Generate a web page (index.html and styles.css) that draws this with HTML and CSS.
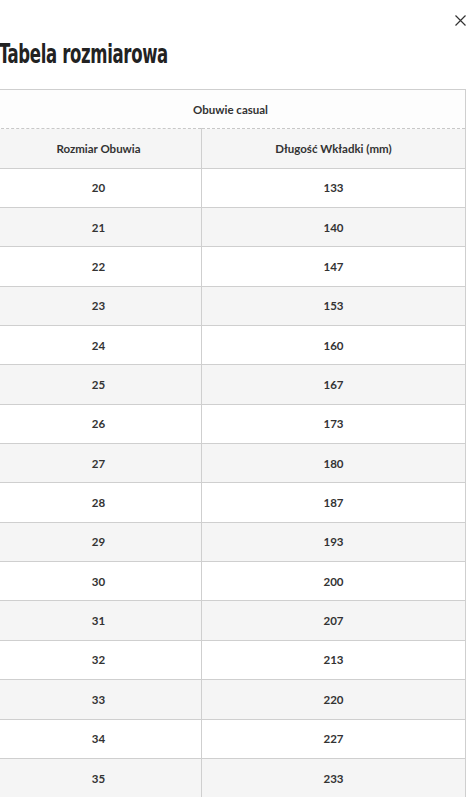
FILE: index.html
```html
<!DOCTYPE html>
<html lang="pl">
<head>
<meta charset="utf-8">
<link rel="stylesheet" href="styles.css">
<title>Tabela rozmiarowa</title>
</head>
<body>
<div class="modal">
  <button class="close" aria-label="Zamknij">
    <svg width="11" height="11" viewBox="0 0 11 11"><path d="M0.5 0.5 L10.5 10.5 M10.5 0.5 L0.5 10.5" stroke="#333" stroke-width="1.2" fill="none"/></svg>
  </button>
  <h1 class="title">Tabela rozmiarowa</h1>
  <table class="sizes">
    <colgroup><col class="col-size"><col class="col-len"></colgroup>
    <thead>
      <tr class="caption-row"><th colspan="2">Obuwie casual</th></tr>
      <tr class="head-row"><th>Rozmiar Obuwia</th><th>Długość Wkładki (mm)</th></tr>
    </thead>
    <tbody>
      <tr><td>20</td><td>133</td></tr>
      <tr><td>21</td><td>140</td></tr>
      <tr><td>22</td><td>147</td></tr>
      <tr><td>23</td><td>153</td></tr>
      <tr><td>24</td><td>160</td></tr>
      <tr><td>25</td><td>167</td></tr>
      <tr><td>26</td><td>173</td></tr>
      <tr><td>27</td><td>180</td></tr>
      <tr><td>28</td><td>187</td></tr>
      <tr><td>29</td><td>193</td></tr>
      <tr><td>30</td><td>200</td></tr>
      <tr><td>31</td><td>207</td></tr>
      <tr><td>32</td><td>213</td></tr>
      <tr><td>33</td><td>220</td></tr>
      <tr><td>34</td><td>227</td></tr>
      <tr><td>35</td><td>233</td></tr>
    </tbody>
  </table>
</div>
</body>
</html>
```

FILE: styles.css
```css
html, body {
  margin: 0;
  padding: 0;
  background: #ffffff;
  overflow: hidden;
}
.modal {
  position: relative;
  margin-left: -5px;
  width: 470px;
  padding-top: 37px;
  font-family: Lato, "Open Sans", sans-serif;
  color: #333;
}
.close {
  position: absolute;
  top: 15px;
  right: -1px;
  width: 11px;
  height: 11px;
  padding: 0;
  border: 0;
  background: none;
  display: flex;
}
.title {
  margin: 0 0 0 4px;
  font-family: "DejaVu Sans Condensed", "DejaVu Sans", sans-serif;
  font-weight: 700;
  font-size: 27px;
  line-height: 34px;
  color: #222;
  letter-spacing: -0.5px;
  transform: scaleX(0.68);
  transform-origin: left center;
  white-space: nowrap;
}
.sizes {
  margin-top: 18px;
  width: 470px;
  border-collapse: collapse;
  table-layout: fixed;
  font-size: 11.5px;
  font-weight: 700;
  text-align: center;
}
.col-size { width: 206px; }
.col-len { width: 264px; }
.sizes th, .sizes td {
  border: 1px solid #cfcfcf;
  padding: 0;
  height: 38.35px;
}
.caption-row th {
  background: #fdfdfd;
  border-bottom: 1px dashed #c8c8c8;
}
.head-row th {
  background: #f5f5f5;
  border-top: 1px dashed #c8c8c8;
}
.sizes tbody tr:nth-child(odd) td { background: #ffffff; }
.sizes tbody tr:nth-child(even) td { background: #f5f5f5; }
```
